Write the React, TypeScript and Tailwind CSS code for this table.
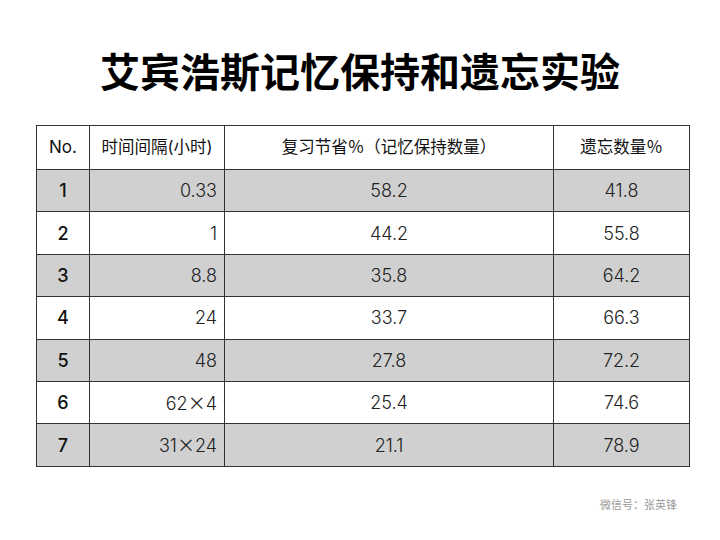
import React from "react";

const rows: [string, React.ReactNode, string, string][] = [
  ["1", "0.33", "58.2", "41.8"],
  ["2", "1", "44.2", "55.8"],
  ["3", "8.8", "35.8", "64.2"],
  ["4", "24", "33.7", "66.3"],
  ["5", "48", "27.8", "72.2"],
  ["6", <>62<span className="font-normal" style={{ fontFamily: '"Noto Sans CJK SC", sans-serif' }}>×</span>4</>, "25.4", "74.6"],
  ["7", <>31<span className="font-normal" style={{ fontFamily: '"Noto Sans CJK SC", sans-serif' }}>×</span>24</>, "21.1", "78.9"],
];

export default function App() {
  return (
    <div
      className="w-[720px] h-[540px] bg-white relative flex flex-col items-center"
      style={{ fontFamily: 'Inter, "Noto Sans CJK SC", "Noto Sans", sans-serif' }}
    >
      <h1
        className="mt-[44px] h-[52px] text-[40px] leading-[52px] font-bold text-black"
        style={{ fontFamily: '"Noto Sans CJK SC", sans-serif' }}
      >
        艾宾浩斯记忆保持和遗忘实验
      </h1>
      <table className="mt-[29px] self-start ml-[36px] border-collapse border border-[#333] text-[#222] text-[18px] font-light">
        <thead>
          <tr className="h-[44px] bg-white text-[#111]">
            <th className="w-[53px] border border-[#333] font-normal text-[17px] text-center">No.</th>
            <th className="w-[135px] border border-[#333] font-normal text-[16.5px] text-center">时间间隔(小时)</th>
            <th className="w-[329px] border border-[#333] font-normal text-[16.5px] text-center">复习节省％（记忆保持数量）</th>
            <th className="w-[136px] border border-[#333] font-normal text-[16.5px] text-center">遗忘数量％</th>
          </tr>
        </thead>
        <tbody>
          {rows.map((r, i) => (
            <tr key={i} className={i % 2 === 0 ? "h-[42.4px] bg-[#d0d0d0]" : "h-[42.4px] bg-white"}>
              <td className="border border-[#333] text-center font-medium text-[#111]">{r[0]}</td>
              <td className="border border-[#333] text-right pr-[7px]">{r[1]}</td>
              <td className="border border-[#333] text-center">{r[2]}</td>
              <td className="border border-[#333] text-center">{r[3]}</td>
            </tr>
          ))}
        </tbody>
      </table>
      <div
        className="absolute left-[600px] top-[496px] text-[11px] text-[#999]"
        style={{ fontFamily: '"Noto Sans CJK SC", sans-serif' }}
      >
        微信号：张英锋
      </div>
    </div>
  );
}
